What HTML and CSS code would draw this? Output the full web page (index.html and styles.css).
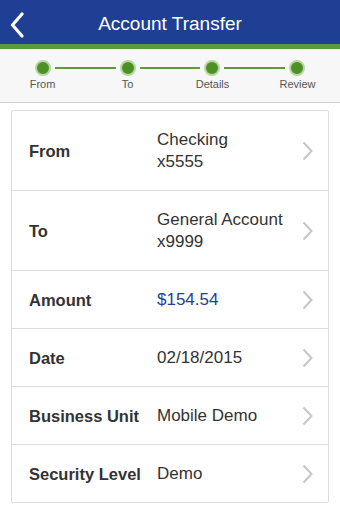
FILE: index.html
```html
<!DOCTYPE html>
<html lang="en">
<head>
    <meta charset="UTF-8">
    <title>Account Transfer</title>
    <link rel="stylesheet" href="styles.css">
</head>
<body>
    <header class="topbar">
        <a class="back" href="#">
            <svg width="14" height="26" viewBox="0 0 14 26"><path d="M12 2 L2.5 13 L12 24" fill="none" stroke="#fff" stroke-width="3.2" stroke-linecap="round" stroke-linejoin="round"/></svg>
        </a>
        <h1>Account Transfer</h1>
    </header>
    <div class="steps">
        <div class="track">
            <span class="dot"></span><span class="line"></span>
            <span class="dot"></span><span class="line"></span>
            <span class="dot"></span><span class="line"></span>
            <span class="dot"></span>
        </div>
        <div class="labels">
            <span>From</span>
            <span>To</span>
            <span>Details</span>
            <span>Review</span>
        </div>
    </div>
    <div class="card">
        <div class="row">
            <div class="label">From</div>
            <div class="value">Checking<br>x5555</div>
            <svg class="chev" width="11" height="20" viewBox="0 0 11 20"><path d="M1.5 1.5 L9.5 10 L1.5 18.5" fill="none" stroke="#c6c6c6" stroke-width="2"/></svg>
        </div>
        <div class="row">
            <div class="label">To</div>
            <div class="value">General Account<br>x9999</div>
            <svg class="chev" width="11" height="20" viewBox="0 0 11 20"><path d="M1.5 1.5 L9.5 10 L1.5 18.5" fill="none" stroke="#c6c6c6" stroke-width="2"/></svg>
        </div>
        <div class="row">
            <div class="label">Amount</div>
            <div class="value money">$154.54</div>
            <svg class="chev" width="11" height="20" viewBox="0 0 11 20"><path d="M1.5 1.5 L9.5 10 L1.5 18.5" fill="none" stroke="#c6c6c6" stroke-width="2"/></svg>
        </div>
        <div class="row">
            <div class="label">Date</div>
            <div class="value">02/18/2015</div>
            <svg class="chev" width="11" height="20" viewBox="0 0 11 20"><path d="M1.5 1.5 L9.5 10 L1.5 18.5" fill="none" stroke="#c6c6c6" stroke-width="2"/></svg>
        </div>
        <div class="row">
            <div class="label">Business Unit</div>
            <div class="value">Mobile Demo</div>
            <svg class="chev" width="11" height="20" viewBox="0 0 11 20"><path d="M1.5 1.5 L9.5 10 L1.5 18.5" fill="none" stroke="#c6c6c6" stroke-width="2"/></svg>
        </div>
        <div class="row">
            <div class="label">Security Level</div>
            <div class="value">Demo</div>
            <svg class="chev" width="11" height="20" viewBox="0 0 11 20"><path d="M1.5 1.5 L9.5 10 L1.5 18.5" fill="none" stroke="#c6c6c6" stroke-width="2"/></svg>
        </div>
    </div>
</body>
</html>
```

FILE: styles.css
```css
body {
    margin: 0;
    font-family: "Liberation Sans", Arial, sans-serif;
    color: #333;
    background: #fff;
}
.topbar {
    height: 44px;
    background: #1e3f94;
    border-bottom: 5px solid #5b9a3c;
    display: flex;
    align-items: center;
    position: relative;
}
.back {
    position: absolute;
    left: 10px;
    top: 12px;
    display: block;
}
.back svg {
    display: block;
}
.topbar h1 {
    flex: 1;
    margin: 0;
    padding-top: 4px;
    text-align: center;
    color: #fff;
    font-size: 19px;
    font-weight: normal;
}
.steps {
    background: #f7f7f7;
    border-bottom: 1px solid #d0d0d0;
    padding: 11px 0 11px;
}
.track {
    display: flex;
    align-items: center;
    padding: 0 35px;
}
.dot {
    width: 12px;
    height: 12px;
    border-radius: 50%;
    background: #4d9126;
    border: 2px solid #b6d7a2;
    flex: none;
}
.line {
    flex: 1;
    height: 2px;
    margin: 0 4px;
    background: #5d9a3e;
}
.labels {
    display: grid;
    grid-template-columns: repeat(4, 1fr);
    margin-top: 1px;
}
.labels span {
    text-align: center;
    font-size: 11px;
    line-height: 14px;
    color: #555;
}
.card {
    margin: 7px 11px;
    border: 1px solid #dcdcdc;
    border-radius: 2px;
}
.row {
    display: flex;
    align-items: center;
    padding: 18px 15px 17px 17px;
    border-top: 1px solid #dcdcdc;
    font-size: 17px;
    line-height: 22px;
}
.row:first-child {
    border-top: none;
}
.label {
    width: 128px;
    flex: none;
    font-size: 16.5px;
    font-weight: bold;
    color: #333;
}
.value {
    flex: 1;
    color: #333;
}
.value.money {
    color: #22418f;
}
.chev {
    flex: none;
    display: block;
}
```
